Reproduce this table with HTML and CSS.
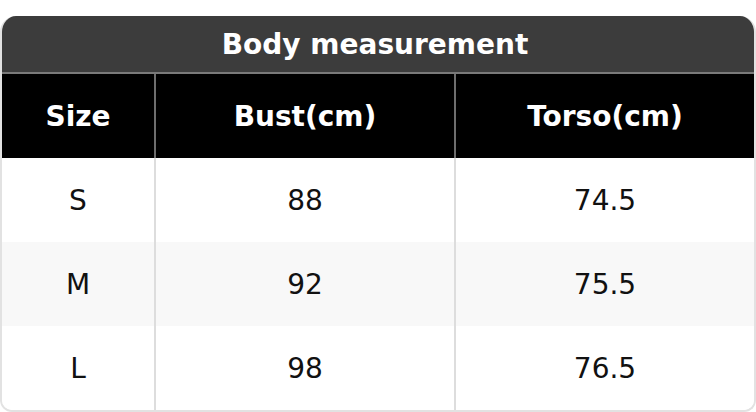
FILE: index.html
```html
<!DOCTYPE html>
<html>
<head>
<meta charset="utf-8">
<link rel="stylesheet" href="styles.css">
</head>
<body>
<div class="card">
  <div class="title">Body measurement</div>
  <div class="grid">
    <div class="cell head">Size</div>
    <div class="cell head">Bust(cm)</div>
    <div class="cell head last">Torso(cm)</div>
    <div class="cell">S</div>
    <div class="cell">88</div>
    <div class="cell last">74.5</div>
    <div class="cell alt">M</div>
    <div class="cell alt">92</div>
    <div class="cell alt last">75.5</div>
    <div class="cell">L</div>
    <div class="cell">98</div>
    <div class="cell last">76.5</div>
  </div>
</div>
</body>
</html>
```
FILE: styles.css
```css
html, body {
  margin: 0;
  padding: 0;
  background: #ffffff;
}
body {
  padding-top: 16px;
  font-family: "DejaVu Sans", Verdana, sans-serif;
}
.card {
  width: 756px;
  box-sizing: border-box;
  border: 2px solid #e2e2e2;
  border-top: none;
  border-radius: 16px 16px 12px 12px;
  overflow: hidden;
}
.title {
  background: #3c3c3c;
  color: #ffffff;
  font-weight: bold;
  font-size: 28px;
  height: 56px;
  display: flex;
  align-items: center;
  justify-content: center;
  padding-right: 6px;
  border-bottom: 2px solid #7a7a7a;
  margin: 0 -2px;
}
.grid {
  display: grid;
  grid-template-columns: 154px 300px 1fr;
}
.cell {
  height: 84px;
  display: flex;
  align-items: center;
  justify-content: center;
  font-size: 28px;
  color: #111111;
  border-right: 2px solid #dddddd;
  background: #ffffff;
}
.cell.last {
  border-right: none;
}
.head {
  background: #000000;
  color: #ffffff;
  font-weight: bold;
  border-right-color: #6e6e6e;
}
.alt {
  background: #f8f8f8;
}
```
